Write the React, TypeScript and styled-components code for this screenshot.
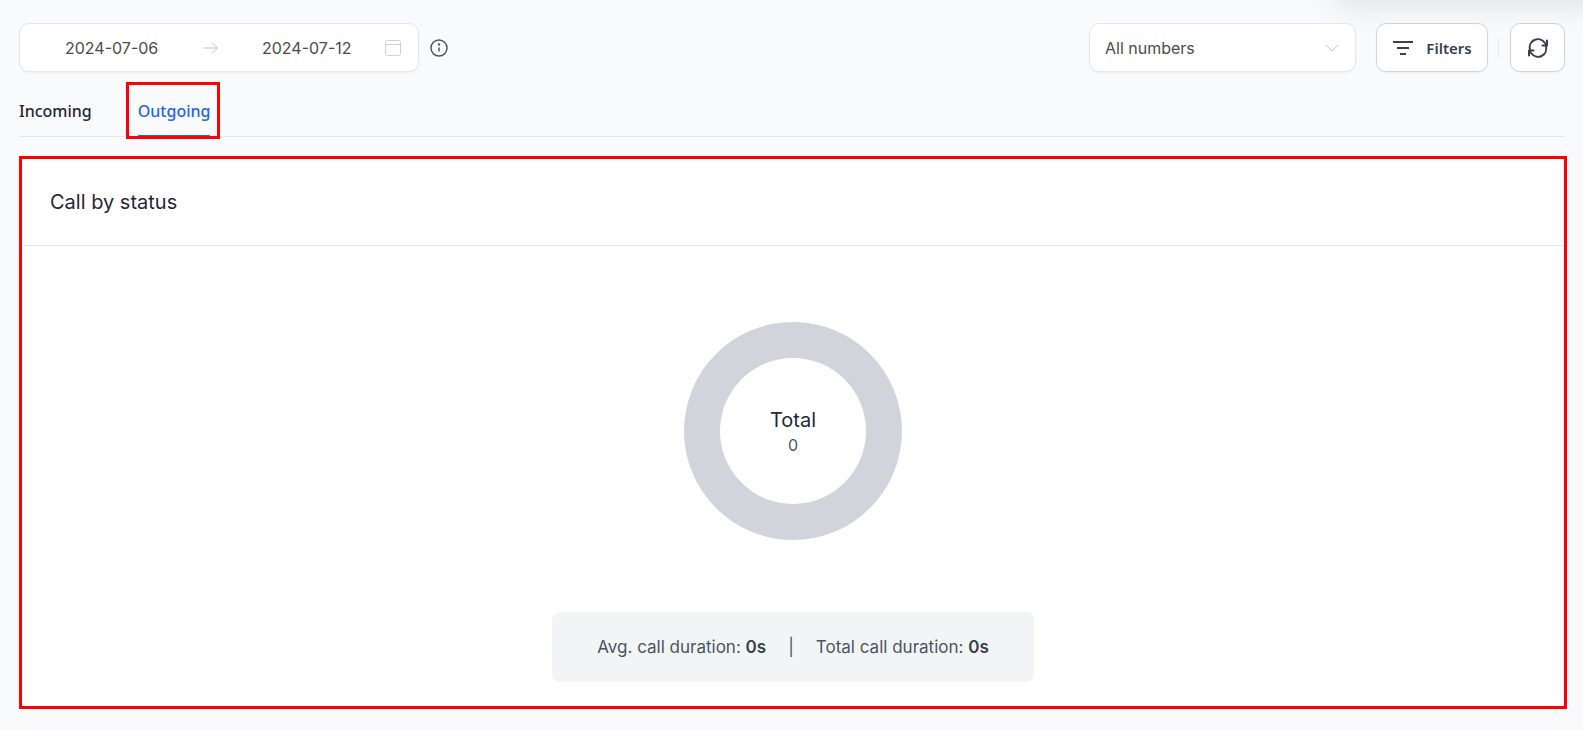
import React from "react";
import styled, { createGlobalStyle } from "styled-components";

const GlobalStyle = createGlobalStyle`
  html, body {
    margin: 0;
    padding: 0;
    height: 100%;
    background: #f9fafb;
    overflow: hidden;
  }
  * {
    box-sizing: border-box;
  }
`;

export default function App() {
  return (
    <Page>
      <GlobalStyle />
      <CornerGlow />
      <Toolbar>
        <DateGroup>
          <DateBox>
            <DateText>2024-07-06</DateText>
            <Arrow viewBox="0 0 16 16" fill="none" stroke="#c4c7cc" strokeWidth="1">
              <path d="M0.5 8h15M9.5 2l6 6-6 6" />
            </Arrow>
            <DateText>2024-07-12</DateText>
            <CalendarIcon viewBox="0 0 16 16" fill="none" stroke="#d0d2d6" strokeWidth="1">
              <rect x="0.5" y="0.5" width="15" height="15" rx="2" />
              <path d="M0.5 4.5h15" />
            </CalendarIcon>
          </DateBox>
          <InfoIcon viewBox="0 0 18 18" fill="none" stroke="#4b5563" strokeWidth="1.5">
            <circle cx="9" cy="9" r="8" />
            <path d="M9 8.5v4" />
            <circle cx="9" cy="5.6" r="0.5" fill="#4b5563" />
          </InfoIcon>
        </DateGroup>
        <Actions>
          <Select>
            <SelectText>All numbers</SelectText>
            <Chevron viewBox="0 0 14 8" fill="none" stroke="#c4c7cc" strokeWidth="1">
              <path d="M1 1l6 6 6-6" />
            </Chevron>
          </Select>
          <FilterButton>
            <svg width="22" height="16" viewBox="0 0 22 16" fill="none" stroke="#374151" strokeWidth="2">
              <path d="M1 2h20M5 8h12M8 14h6" />
            </svg>
            Filters
          </FilterButton>
          <Divider />
          <RefreshButton>
            <svg width="24" height="24" viewBox="0 0 24 24" fill="none" stroke="#374151" strokeWidth="2" strokeLinecap="round" strokeLinejoin="round">
              <path d="M4 13.5A8.2 8.2 0 0 1 18.5 6.5L20.5 9" />
              <path d="M21 4.5V9.5H16.5" />
              <path d="M20 10.5A8.2 8.2 0 0 1 5.5 17.5L3.5 15" />
              <path d="M3 19.5V14.5H7.5" />
            </svg>
          </RefreshButton>
        </Actions>
      </Toolbar>
      <Tabs>
        <Tab>Incoming</Tab>
        <Tab $active>Outgoing</Tab>
      </Tabs>
      <Card>
        <CardHeader>Call by status</CardHeader>
        <CardBody>
          <Donut>
            <DonutHole>
              <DonutLabel>Total</DonutLabel>
              <DonutValue>0</DonutValue>
            </DonutHole>
          </Donut>
          <Stats>
            <span>
              Avg. call duration: <strong>0s</strong>
            </span>
            <StatSeparator>|</StatSeparator>
            <span>
              Total call duration: <strong>0s</strong>
            </span>
          </Stats>
        </CardBody>
      </Card>
    </Page>
  );
}

const Page = styled.div`
  position: relative;
  width: 1583px;
  height: 730px;
  padding: 23px 18px 0 19px;
  overflow: hidden;
  font-family: Inter, "Noto Sans", sans-serif;
  color: #111827;
`;

const CornerGlow = styled.div`
  position: absolute;
  top: -60px;
  right: -20px;
  width: 270px;
  height: 60px;
  border-radius: 10px;
  box-shadow: 0 6px 30px rgba(0, 0, 0, 0.1);
`;

const Toolbar = styled.div`
  display: flex;
  justify-content: space-between;
  align-items: center;
  height: 49px;
`;

const DateGroup = styled.div`
  display: flex;
  align-items: center;
  gap: 11px;
`;

const DateBox = styled.div`
  display: flex;
  align-items: center;
  width: 400px;
  height: 49px;
  padding: 0 17px 0 45px;
  background: #fff;
  border: 1px solid #e5e7eb;
  border-radius: 10px;
  box-shadow: 0 1px 2px rgba(16, 24, 40, 0.05);
`;

const DateText = styled.span`
  width: 90px;
  font-size: 16px;
  color: #4b4b4b;
  white-space: nowrap;
`;

const Arrow = styled.svg`
  width: 16px;
  height: 16px;
  margin: 0 44px 0 47px;
`;

const CalendarIcon = styled.svg`
  width: 16px;
  height: 16px;
  margin-left: 33px;
`;

const InfoIcon = styled.svg`
  width: 18px;
  height: 18px;
`;

const Actions = styled.div`
  display: flex;
  align-items: center;
`;

const Select = styled.div`
  display: flex;
  align-items: center;
  justify-content: space-between;
  width: 267px;
  height: 49px;
  margin-right: 20px;
  padding: 0 16px 0 15px;
  background: #fff;
  border: 1px solid #e5e7eb;
  border-radius: 10px;
  box-shadow: 0 1px 2px rgba(16, 24, 40, 0.05);
`;

const SelectText = styled.span`
  font-size: 16px;
  color: #4b4b4b;
`;

const Chevron = styled.svg`
  width: 14px;
  height: 8px;
`;

const FilterButton = styled.button`
  display: flex;
  align-items: center;
  justify-content: center;
  gap: 12px;
  width: 112px;
  height: 49px;
  padding: 0;
  background: #fff;
  border: 1px solid #d1d5db;
  border-radius: 10px;
  box-shadow: 0 1px 2px rgba(16, 24, 40, 0.05);
  font-family: "Noto Sans", sans-serif;
  font-size: 15px;
  font-weight: 600;
  color: #374151;
`;

const Divider = styled.div`
  width: 1px;
  height: 20px;
  margin: 0 11px 0 10px;
  background: #e5e7eb;
`;

const RefreshButton = styled.button`
  display: flex;
  align-items: center;
  justify-content: center;
  width: 55px;
  height: 49px;
  padding: 0;
  background: #fff;
  border: 1px solid #d1d5db;
  border-radius: 10px;
  box-shadow: 0 1px 2px rgba(16, 24, 40, 0.05);
`;

const Tabs = styled.div`
  display: flex;
  gap: 46px;
  height: 65px;
  border-bottom: 1px solid #e5e7eb;
`;

const Tab = styled.div<{ $active?: boolean }>`
  position: relative;
  display: flex;
  align-items: center;
  height: 65px;
  padding-top: 14px;
  font-family: "Noto Sans", sans-serif;
  font-size: 16px;
  font-weight: 500;
  color: ${(p) => (p.$active ? "#2563eb" : "#1f2937")};
  border-bottom: 2px solid ${(p) => (p.$active ? "#2563eb" : "transparent")};

  ${(p) =>
    p.$active &&
    `
    &::after {
      content: "";
      position: absolute;
      left: -12px;
      right: -10px;
      top: 10px;
      bottom: -4px;
      border: 3px solid #ff0000;
    }
  `}
`;

const Card = styled.div`
  display: flex;
  flex-direction: column;
  width: 1548px;
  height: 553px;
  margin-top: 19px;
  background: #fff;
  border: 3px solid #ff0000;
`;

const CardHeader = styled.div`
  display: flex;
  align-items: center;
  height: 87px;
  padding-left: 28px;
  border-bottom: 1px solid #e5e7eb;
  font-size: 20px;
  color: #1f2937;
`;

const CardBody = styled.div`
  display: flex;
  flex-direction: column;
  align-items: center;
  padding-top: 76px;
`;

const Donut = styled.div`
  display: flex;
  align-items: center;
  justify-content: center;
  width: 218px;
  height: 218px;
  border-radius: 50%;
  background: #d1d5db;
`;

const DonutHole = styled.div`
  display: flex;
  flex-direction: column;
  align-items: center;
  justify-content: center;
  width: 146px;
  height: 146px;
  border-radius: 50%;
  background: #fff;
`;

const DonutLabel = styled.div`
  font-size: 20px;
  line-height: 28px;
  color: #1f2937;
`;

const DonutValue = styled.div`
  font-size: 16px;
  line-height: 22px;
  color: #4b5563;
`;

const Stats = styled.div`
  display: flex;
  align-items: center;
  justify-content: center;
  width: 482px;
  height: 70px;
  margin-top: 72px;
  background: #f3f4f6;
  border-radius: 8px;
  font-size: 17px;
  color: #4b5563;
  white-space: nowrap;

  strong {
    font-weight: 600;
    color: #374151;
  }
`;

const StatSeparator = styled.span`
  margin: 0 22px;
`;
